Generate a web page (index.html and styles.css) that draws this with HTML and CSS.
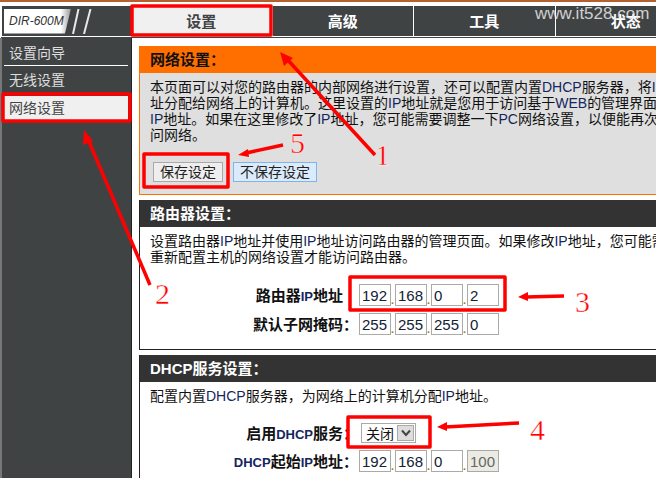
FILE: index.html
```html
<!DOCTYPE html>
<html lang="en">
<head>
    <meta charset="UTF-8">
    <meta name="viewport" content="width=device-width, initial-scale=1.0">
    <title>DIR-600M</title>
    <link rel="stylesheet" href="styles.css">
</head>
<body>
    <div class="page">
        <div class="strip"></div>
        <div class="header">
            <div class="logo-cell">
                <div class="logo"><i>DIR-600M</i></div>
                <svg class="slashes" width="24" height="25" viewBox="0 0 24 25">
                    <path d="M7.5 0 L2 25 M19.5 0 L13 25" stroke="#e8e8e8" stroke-width="2" fill="none"/>
                </svg>
            </div>
            <div class="tab active">设置</div>
            <div class="tab">高级</div>
            <div class="tab">工具</div>
            <div class="tab">状态</div>
        </div>
        <div class="rule"></div>
        <div class="columns">
            <div class="sidebar">
                <div class="side-item first">设置向导</div>
                <div class="side-item">无线设置</div>
                <div class="side-item current">网络设置</div>
            </div>
            <div class="content">
                <div class="panel notice">
                    <h2 class="orange-head">网络设置：</h2>
                    <div class="panel-body">
                        <p>本页面可以对您的路由器的内部网络进行设置，还可以配置内置<span class="lat">DHCP</span>服务器，将<span class="lat">IP</span><br>
                        址分配给网络上的计算机。这里设置的<span class="lat">IP</span>地址就是您用于访问基于<span class="lat">WEB</span>的管理界面<br>
                        <span class="lat">IP</span>地址。如果在这里修改了<span class="lat">IP</span>地址，您可能需要调整一下<span class="lat">PC</span>网络设置，以便能再次访<br>
                        问网络。</p>
                        <div class="actions">
                            <button class="btn">保存设定</button>
                            <button class="btn blue">不保存设定</button>
                        </div>
                    </div>
                </div>
                <div class="panel router">
                    <h2 class="dark-head">路由器设置：</h2>
                    <div class="panel-body">
                        <p>设置路由器<span class="lat">IP</span>地址并使用<span class="lat">IP</span>地址访问路由器的管理页面。如果修改<span class="lat">IP</span>地址，您可能需<br>
                        重新配置主机的网络设置才能访问路由器。</p>
                        <div class="row">
                            <label class="no-colon">路由器<span class="lat">IP</span>地址</label>
                            <div class="ip">
                                <input value="192"><span>.</span><input value="168"><span>.</span><input value="0"><span>.</span><input value="2">
                            </div>
                        </div>
                        <div class="row">
                            <label>默认子网掩码：</label>
                            <div class="ip">
                                <input value="255"><span>.</span><input value="255"><span>.</span><input value="255"><span>.</span><input value="0">
                            </div>
                        </div>
                    </div>
                </div>
                <div class="panel dhcp">
                    <h2 class="dark-head">DHCP服务设置：</h2>
                    <div class="panel-body">
                        <p>配置内置<span class="lat">DHCP</span>服务器，为网络上的计算机分配<span class="lat">IP</span>地址。</p>
                        <div class="row select-row">
                            <label>启用<span class="lat">DHCP</span>服务：</label>
                            <div class="fake-select">
                                <span class="value">关闭</span>
                                <span class="arrow">
                                    <svg width="10" height="8" viewBox="0 0 10 8"><path d="M1 1.5 L5 6 L9 1.5" stroke="#444" stroke-width="2" fill="none"/></svg>
                                </span>
                            </div>
                        </div>
                        <div class="row">
                            <label><span class="lat">DHCP</span>起始<span class="lat">IP</span>地址：</label>
                            <div class="ip">
                                <input value="192"><span>.</span><input value="168"><span>.</span><input value="0"><span>.</span><input class="off" value="100" disabled>
                            </div>
                        </div>
                    </div>
                </div>
            </div>
        </div>

        <!-- hand drawn marks on top of the screenshot -->
        <svg class="marks" width="656" height="478" viewBox="0 0 656 478">
            <g fill="none" stroke="#f00" stroke-width="3.5" stroke-linejoin="round">
                <rect x="132" y="6" width="139" height="29"/>
                <rect x="3" y="94" width="127" height="27"/>
                <rect x="144" y="154" width="84" height="33"/>
                <rect x="350" y="277" width="155" height="33"/>
                <rect x="348" y="417" width="82" height="30"/>
            </g>
            <g stroke="#f00" stroke-width="3.5" fill="none">
                <path d="M375 155 L286 58"/>
                <path d="M150 285 L87 137"/>
                <path d="M564 296 L526 297"/>
                <path d="M519 423 L445 427"/>
                <path d="M283 145 L246 153"/>
            </g>
            <g fill="#f00">
                <path d="M280 52 L293 58 L284 66 Z"/>
                <path d="M84 130 L93 141 L83 145 Z"/>
                <path d="M518 297 L528 292 L528 301 Z"/>
                <path d="M437 427 L447 422 L447 431 Z"/>
                <path d="M238 155 L248 149 L249 157 Z"/>
            </g>
            <g class="digits">
                <text x="375" y="165">1</text>
                <text x="155" y="304">2</text>
                <text x="575" y="312">3</text>
                <text x="530" y="440">4</text>
                <text x="290" y="153">5</text>
            </g>
        </svg>
        <div class="watermark">www.it528.com</div>
    </div>
</body>
</html>
```

FILE: styles.css
```css
* {
    box-sizing: border-box;
}
html, body {
    margin: 0;
    height: 100%;
    overflow: hidden;
    background-color: #fff;
}
body {
    font-family: "Liberation Sans", "Noto Sans CJK SC", sans-serif;
    font-size: 14px;
    color: #111;
}
.page {
    position: relative;
    width: 656px;
    height: 478px;
    overflow: hidden;
}
.strip {
    height: 2px;
    background-color: #b5602f;
    margin-bottom: 4px;
}
.header {
    display: flex;
    height: 30px;
    margin-left: 1px;
    background-color: #404344;
    border-left: 1px solid #fff;
}
.logo-cell {
    display: flex;
    align-items: center;
    flex: 0 0 129px;
    padding: 0 0 0 2px;
}
.logo {
    width: 67px;
    height: 25px;
    line-height: 25px;
    padding-left: 5px;
    background: linear-gradient(90deg, #fff 85%, #999 100%);
    clip-path: polygon(0 0, 100% 0, 91% 100%, 0 100%);
    color: #333;
    font-size: 12px;
    white-space: nowrap;
}
.tab {
    flex: 0 0 141.5px;
    text-align: center;
    padding-top: 1px;
    line-height: 30px;
    font-size: 15px;
    font-weight: bold;
    color: #fff;
    border-right: 1px solid #fff;
}
.tab.active {
    background-color: #f0f0f0;
    color: #404344;
}
.rule {
    height: 2px;
    margin-left: 1px;
    background-color: #404344;
    border-top: 1px solid #fff;
}
.columns {
    display: flex;
    height: 440px;
}
.sidebar {
    flex: 0 0 132px;
    background-color: #404344;
    border-left: 2px solid #777;
    border-right: 1px solid #222;
    padding: 4px 3px 0 2px;
}
.side-item {
    height: 28px;
    line-height: 28px;
    padding-left: 5px;
    color: #ddd;
}
.side-item.first {
    border-bottom: 1px solid #fff;
    height: 24px;
    line-height: 22px;
}
.side-item.current {
    margin-top: 2px;
    height: 24px;
    line-height: 24px;
    background-color: #f0f0f0;
    color: #444;
}
.content {
    flex: 1;
    min-width: 0;
    padding: 8px 0 0 7px;
    overflow: hidden;
}
.panel {
    width: 540px;
    margin-bottom: 5px;
    border-left: 1px solid #222;
    border-right: 1px solid #222;
    white-space: nowrap;
}
.panel p {
    margin: 0;
    line-height: 16px;
}
.panel h2 {
    margin: 0;
    height: 27px;
    line-height: 27px;
    padding-left: 10px;
    font-size: 15px;
}
.lat {
    color: #14265e;
}
.orange-head {
    background-color: #ff6f00;
    color: #111;
}
.dark-head {
    background-color: #333;
    color: #fff;
}
.notice {
    border: 1px solid #ff6f00;
    border-top: 0;
    background-color: #dfdfdf;
    height: 149px;
}
.panel-body {
    padding: 6px 0 0 10px;
}
.actions {
    display: flex;
    gap: 10px;
    margin: 19px 0 0 3px;
}
.btn {
    height: 20px;
    padding: 0 6px;
    font-family: inherit;
    font-size: 14px;
    line-height: 16px;
    color: #222;
    background-color: #eee;
    border: 1px solid #aaa;
}
.btn.blue {
    background-color: #dcebfb;
    border-color: #7eb4ea;
}
.router {
    height: 150px;
    border-bottom: 1px solid #222;
}
.router p {
    margin-bottom: 19px;
}
.dhcp {
    margin-bottom: 0;
    height: 123px;
}
.dhcp p {
    margin-bottom: 19px;
}
.row {
    display: flex;
    align-items: center;
    height: 22px;
    margin-bottom: 7px;
}
.row label {
    flex: 0 0 209px;
    margin-bottom: 2px;
    padding-right: 1px;
    text-align: right;
    font-weight: bold;
    font-size: 15px;
}
.row label .lat {
    font-size: 13px;
}
.row label.no-colon {
    padding-right: 16px;
}
.select-row {
    height: 20px;
}
.ip {
    display: flex;
    align-items: flex-end;
}
.ip input {
    width: 32px;
    height: 22px;
    padding: 0 0 0 2px;
    font-family: inherit;
    font-size: 15px;
    color: #123;
    background-color: #fff;
    border: 1px solid #aaa;
}
.ip input.off {
    background-color: #ebebe4;
    color: #666;
}
.ip span {
    width: 4px;
    font-size: 11px;
    line-height: 11px;
    font-weight: bold;
    color: #a67c00;
}
.fake-select {
    display: flex;
    align-items: center;
    justify-content: space-between;
    width: 55px;
    height: 20px;
    margin-left: 2px;
    padding: 1px 1px 1px 4px;
    border: 1px solid #aaa;
    background-color: #fff;
}
.fake-select .arrow {
    display: flex;
    align-items: center;
    justify-content: center;
    width: 17px;
    height: 16px;
    background-color: #ddd;
    border: 1px solid #aaa;
}
.marks {
    position: absolute;
    top: 0;
    left: 0;
}
.digits text {
    font-family: "Liberation Serif", serif;
    font-size: 30px;
    fill: #f00;
    stroke: #fff;
    stroke-width: 0.4px;
}
.watermark {
    position: absolute;
    top: 3px;
    left: 535px;
    font-size: 17px;
    line-height: 22px;
    color: rgba(235, 235, 235, 0.85);
    white-space: nowrap;
}
```
